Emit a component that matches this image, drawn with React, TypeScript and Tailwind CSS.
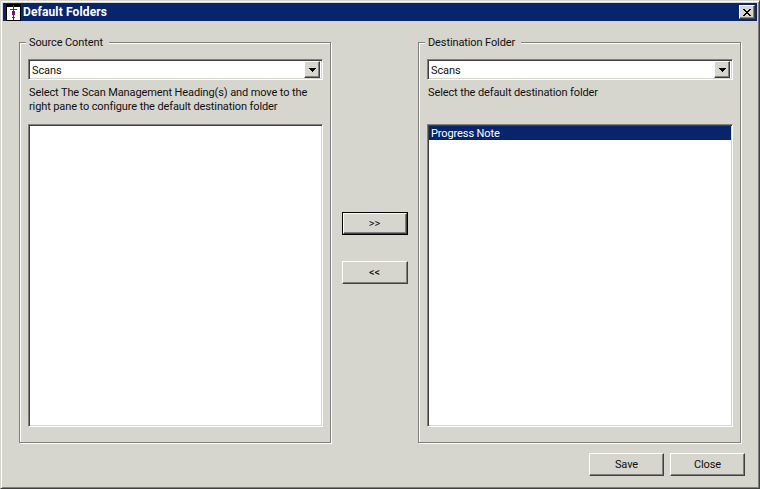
import React from "react";

const raised = "border border-t-white border-l-white border-r-[#404040] border-b-[#404040] shadow-[inset_-1px_-1px_0_#808080] bg-[#d6d5ce]";
const sunken = "border border-t-[#808080] border-l-[#808080] border-r-white border-b-white shadow-[inset_1px_1px_0_#404040,inset_-1px_-1px_0_#d6d5ce] bg-white";

function Combo({ width }: { width: string }) {
  return (
    <div className={`${sunken} ${width} h-[21px] flex items-center justify-between pl-[3px] pr-[2px]`}>
      <span className="leading-none pt-[1px]">Scans</span>
      <div className={`${raised} w-[16px] h-[17px] flex items-center justify-center`}>
        <svg width="7" height="4" viewBox="0 0 7 4" shapeRendering="crispEdges">
          <path d="M0 0h7v1H0zM1 1h5v1H1zM2 2h3v1H2zM3 3h1v1H3z" fill="#000" />
        </svg>
      </div>
    </div>
  );
}

function Group({ title, width, children }: { title: string; width: string; children: React.ReactNode }) {
  return (
    <fieldset className={`relative ${width} h-[401px] border border-[#808080] shadow-[1px_1px_0_white,inset_1px_1px_0_white] pt-[16px] pl-[8px]`}>
      <span className="absolute left-[6px] top-[-7px] bg-[#d6d5ce] pl-[3px] pr-[6px] leading-[14px]">{title}</span>
      {children}
    </fieldset>
  );
}

function Button({ label, className }: { label: string; className: string }) {
  return <button className={`${raised} ${className} h-[23px] text-center leading-none`}>{label}</button>;
}

export default function App() {
  return (
    <div className="w-[760px] h-[489px] overflow-hidden bg-[#d6d5ce] border border-t-[#d6d5ce] border-l-[#d6d5ce] border-r-[#404040] border-b-[#404040] shadow-[inset_1px_1px_0_white,inset_-1px_-1px_0_#808080] p-[2px] flex flex-col text-[#111] text-[11px] tracking-[-0.11px] font-['Roboto',sans-serif]">
      <div className="h-[18px] shrink-0 bg-[#08246b] flex items-center pl-[3px] pr-[2px]">
        <svg width="15" height="17" viewBox="0 0 15 17" className="shrink-0" shapeRendering="crispEdges">
          <rect width="15" height="17" fill="#000" />
          <rect x="1" y="3" width="13" height="13" fill="#fff" />
          <path d="M7 1h1v15H7zM4 5h7v1H4zM6 7h3v4H6zM6 13h3v1H6z" fill="#80107f" />
        </svg>
        <span className="ml-[2px] flex-1 text-white font-bold text-[12px] leading-none tracking-[0.13px]">Default Folders</span>
        <div className={`${raised} w-[16px] h-[14px] flex items-center justify-center`}>
          <svg width="8" height="7" viewBox="0 0 8 7" shapeRendering="crispEdges">
            <path d="M0 0h2v1H0zM6 0h2v1H6zM1 1h2v1H1zM5 1h2v1H5zM2 2h4v1H2zM3 3h2v1H3zM2 4h4v1H2zM1 5h2v1H1zM5 5h2v1H5zM0 6h2v1H0zM6 6h2v1H6z" fill="#000" />
          </svg>
        </div>
      </div>

      <div className="flex mt-[21px] pl-[16px]">
        <Group title="Source Content" width="w-[312px]">
          <Combo width="w-[295px]" />
          <p className="mt-[6px] h-[28px] w-[294px] pl-[1px] leading-[14px]">
            Select The Scan Management Heading(s) and move to the<br />
            right pane to configure the default destination folder
          </p>
          <div className={`${sunken} mt-[10px] w-[295px] h-[303px]`} />
        </Group>

        <div className="w-[87px] flex flex-col items-center pt-[170px]">
          <div className="border border-black">
            <Button label=">>" className="block w-[64px] !h-[21px]" />
          </div>
          <Button label="<<" className="mt-[26px] w-[66px]" />
        </div>

        <Group title="Destination Folder" width="w-[323px]">
          <Combo width="w-[306px]" />
          <p className="mt-[6px] h-[28px] pl-[1px] leading-[14px]">Select the default destination folder</p>
          <div className={`${sunken} mt-[10px] w-[306px] h-[303px] p-[1px]`}>
            <div className="h-[14px] bg-[#08246b] text-white leading-[15px] pl-[2px]">Progress Note</div>
          </div>
        </Group>
      </div>

      <div className="flex justify-end gap-[6px] mt-[10px] pr-[12px]">
        <Button label="Save" className="w-[75px]" />
        <Button label="Close" className="w-[75px]" />
      </div>
    </div>
  );
}
